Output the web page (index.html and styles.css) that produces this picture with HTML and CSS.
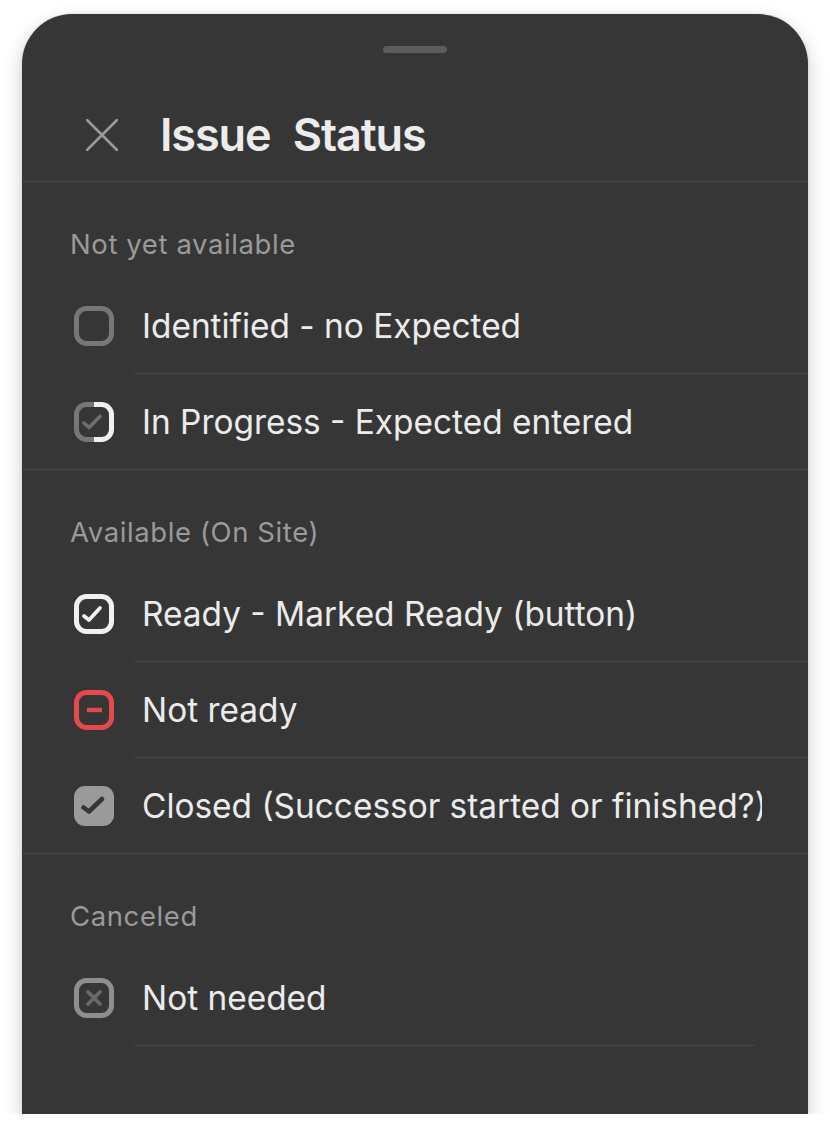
FILE: index.html
```html
<!DOCTYPE html>
<html lang="en">
<head>
<meta charset="utf-8">
<title>Issue Status</title>
<link rel="stylesheet" href="styles.css">
</head>
<body>
<div class="sheet">
  <div class="handle"></div>
  <header class="sheet-header">
    <svg class="close" width="32" height="32" viewBox="0 0 32 32"><path d="M1 1 L31 31 M31 1 L1 31" stroke="#9a9a9a" stroke-width="2.6" stroke-linecap="round" fill="none"/></svg>
    <h1 class="title">Issue Status</h1>
  </header>

  <section class="group">
    <div class="group-title">Not yet available</div>
    <div class="row">
      <svg class="icon" viewBox="0 0 40 40"><rect x="2.5" y="2.5" width="35" height="35" rx="10" fill="none" stroke="#777777" stroke-width="5"/></svg>
      <div class="row-body"><span class="label">Identified - no Expected</span></div>
    </div>
    <div class="row">
      <svg class="icon" viewBox="0 0 40 40">
        <defs>
          <clipPath id="lh"><rect x="0" y="0" width="20" height="40"/></clipPath>
          <clipPath id="rh"><rect x="20" y="0" width="20" height="40"/></clipPath>
        </defs>
        <rect x="2.5" y="2.5" width="35" height="35" rx="10" fill="none" stroke="#777777" stroke-width="5" clip-path="url(#lh)"/>
        <rect x="2.5" y="2.5" width="35" height="35" rx="10" fill="none" stroke="#f0f0f0" stroke-width="5" clip-path="url(#rh)"/>
        <path d="M10 21 L15 25.5 L26 14.5" fill="none" stroke="#6e6e6e" stroke-width="3.6" stroke-linecap="round" stroke-linejoin="round"/>
      </svg>
      <div class="row-body row-body--last"><span class="label">In Progress - Expected entered</span></div>
    </div>
  </section>

  <section class="group">
    <div class="group-title">Available (On Site)</div>
    <div class="row">
      <svg class="icon" viewBox="0 0 40 40">
        <rect x="2.5" y="2.5" width="35" height="35" rx="10" fill="none" stroke="#f0f0f0" stroke-width="5"/>
        <path d="M10 22 L15 26 L26 14" fill="none" stroke="#f0f0f0" stroke-width="3.8" stroke-linecap="round" stroke-linejoin="round"/>
      </svg>
      <div class="row-body"><span class="label">Ready - Marked Ready (button)</span></div>
    </div>
    <div class="row">
      <svg class="icon" viewBox="0 0 40 40">
        <rect x="2.5" y="2.5" width="35" height="35" rx="10" fill="none" stroke="#e5484d" stroke-width="5"/>
        <path d="M13 20 L28 20" stroke="#e5484d" stroke-width="4.4" fill="none"/>
      </svg>
      <div class="row-body"><span class="label">Not ready</span></div>
    </div>
    <div class="row">
      <svg class="icon" viewBox="0 0 40 40">
        <rect x="0" y="0" width="40" height="40" rx="11" fill="#9a9a9a"/>
        <path d="M9.5 21.5 L15 25.5 L28 13" fill="none" stroke="#363636" stroke-width="4.6" stroke-linecap="round" stroke-linejoin="round"/>
      </svg>
      <div class="row-body row-body--last"><span class="label">Closed (Successor started or finished?)</span></div>
    </div>
  </section>

  <section class="group group--end">
    <div class="group-title">Canceled</div>
    <div class="row">
      <svg class="icon" viewBox="0 0 40 40">
        <rect x="2.5" y="2.5" width="35" height="35" rx="10" fill="none" stroke="#8e8e8e" stroke-width="5"/>
        <path d="M14 14 L26 26 M26 14 L14 26" fill="none" stroke="#6a6a6a" stroke-width="3.8" stroke-linecap="round"/>
      </svg>
      <div class="row-body row-body--inset"><span class="label">Not needed</span></div>
    </div>
  </section>
</div>
</body>
</html>
```

FILE: styles.css
```css
* { box-sizing: border-box; }

html, body {
  margin: 0;
  padding: 0;
  background: #ffffff;
}

body {
  padding: 14px 22px 0 22px;
  font-family: Inter, "Noto Sans", sans-serif;
}

.sheet {
  width: 786px;
  height: 1100px;
  background: #363636;
  border-radius: 50px 50px 0 0;
  box-shadow: 0 8px 20px rgba(0, 0, 0, 0.2), 0 0 3px rgba(0, 0, 0, 0.12);
  padding-top: 32px;
  display: flex;
  flex-direction: column;
  overflow: hidden;
}

.handle {
  align-self: center;
  width: 64px;
  height: 7px;
  border-radius: 4px;
  background: #5c5c5c;
}

.sheet-header {
  display: flex;
  align-items: center;
  gap: 42px;
  padding: 58px 0 22px 64px;
  border-bottom: 1px solid #464646;
  height: 129px;
}

.close {
  width: 32px;
  height: 32px;
  flex: none;
}

.title {
  margin: 0;
  font-size: 45px;
  line-height: 48px;
  font-weight: 600;
  color: #ececec;
  letter-spacing: -1.1px;
  word-spacing: 12px;
}

.group {
  border-bottom: 1px solid #464646;
}

.group--end {
  border-bottom: none;
}

.group-title {
  padding: 48px 0 20px 48px;
  height: 96px;
  font-size: 27.5px;
  line-height: 28px;
  color: #9a9a9a;
  letter-spacing: 0.6px;
}

.row {
  display: flex;
  align-items: center;
  padding-left: 52px;
}

.icon {
  width: 40px;
  height: 40px;
  flex: none;
}

.row-body {
  flex: 1;
  min-width: 0;
  margin-left: 20px;
  height: 96px;
  display: flex;
  align-items: center;
  padding: 0 46px 0 8px;
  border-bottom: 1px solid #464646;
}

.row-body--last {
  border-bottom: none;
  height: 95px;
}

.row-body--inset {
  margin-right: 53px;
}

.label {
  flex: 1;
  min-width: 0;
  overflow: hidden;
  white-space: nowrap;
  font-size: 33.4px;
  line-height: 40px;
  color: #ebebeb;
}
```
